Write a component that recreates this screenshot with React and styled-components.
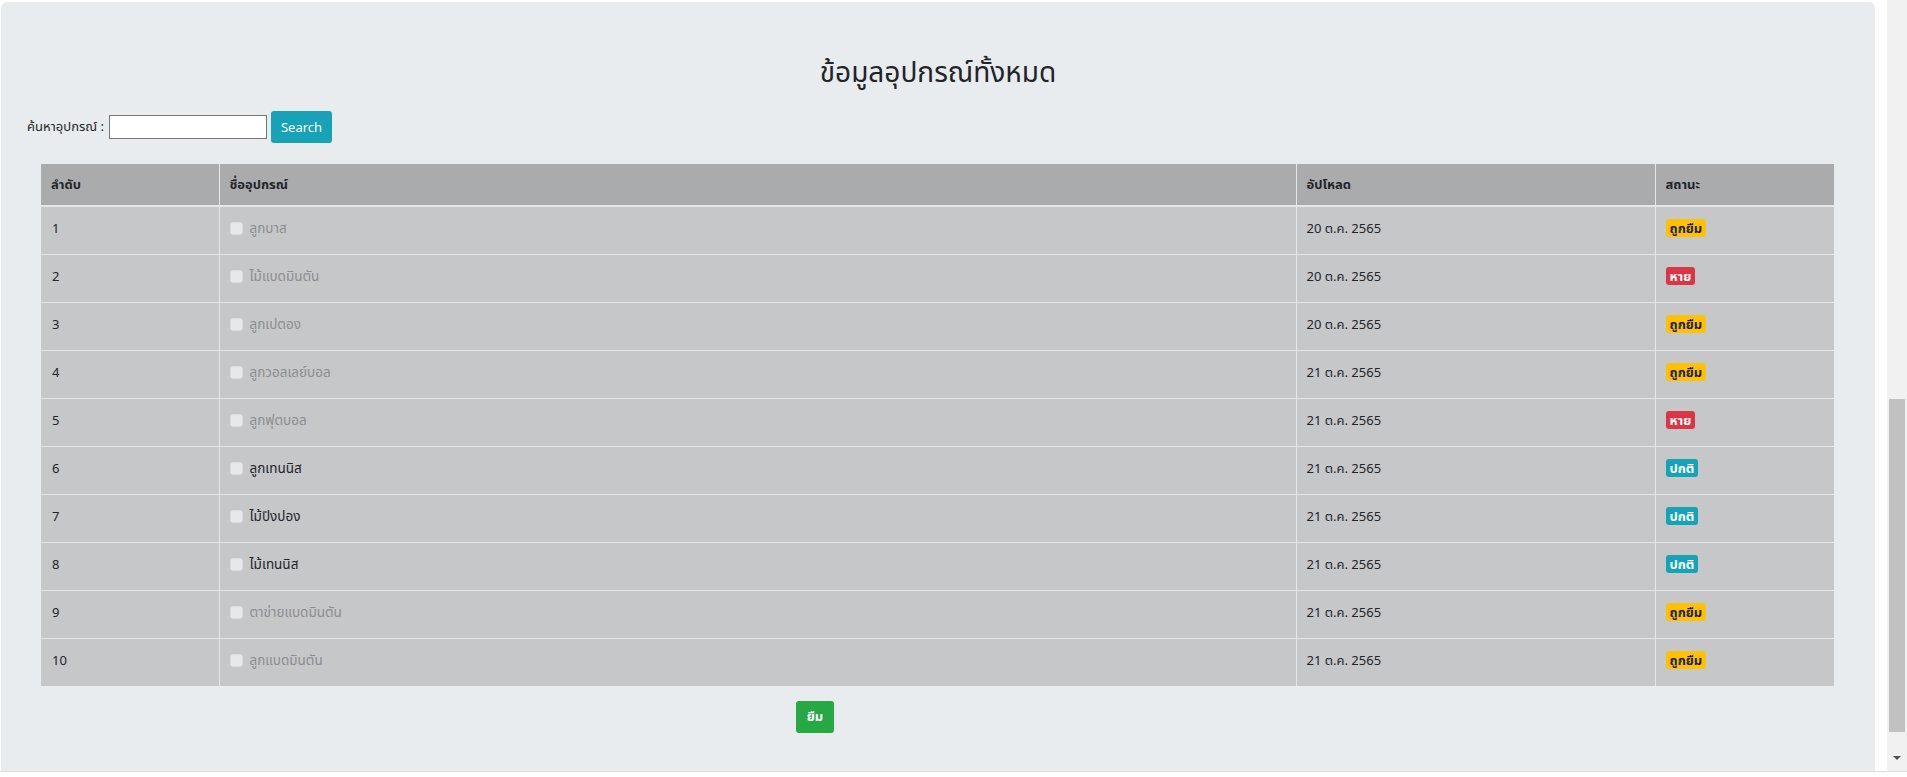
import React from "react";
import styled, { createGlobalStyle } from "styled-components";

const GlobalStyle = createGlobalStyle`
    html, body {
        margin: 0;
        padding: 0;
        background: #fff;
        overflow: hidden;
    }
    body {
        font-family: "Noto Sans", "Noto Sans Thai", Tahoma, "DejaVu Sans", sans-serif;
        font-size: 13px;
        color: #212529;
    }
`;

const items = [
    { id: 1, name: "ลูกบาส", date: "20 ต.ค. 2565", status: "borrowed" },
    { id: 2, name: "ไม้แบดมินตัน", date: "20 ต.ค. 2565", status: "lost" },
    { id: 3, name: "ลูกเปตอง", date: "20 ต.ค. 2565", status: "borrowed" },
    { id: 4, name: "ลูกวอลเลย์บอล", date: "21 ต.ค. 2565", status: "borrowed" },
    { id: 5, name: "ลูกฟุตบอล", date: "21 ต.ค. 2565", status: "lost" },
    { id: 6, name: "ลูกเทนนิส", date: "21 ต.ค. 2565", status: "normal" },
    { id: 7, name: "ไม้ปิงปอง", date: "21 ต.ค. 2565", status: "normal" },
    { id: 8, name: "ไม้เทนนิส", date: "21 ต.ค. 2565", status: "normal" },
    { id: 9, name: "ตาข่ายแบดมินตัน", date: "21 ต.ค. 2565", status: "borrowed" },
    { id: 10, name: "ลูกแบดมินตัน", date: "21 ต.ค. 2565", status: "borrowed" },
];

const statusLabel = {
    borrowed: "ถูกยืม",
    lost: "หาย",
    normal: "ปกติ",
};

const App = () => {
    return (
        <>
            <GlobalStyle />
            <Page>
                <Main>
                    <Panel>
                        <Title>ข้อมูลอุปกรณ์ทั้งหมด</Title>
                        <SearchRow>
                            <label htmlFor="search">ค้นหาอุปกรณ์ :</label>
                            <SearchInput id="search" type="text" />
                            <SearchButton type="button">Search</SearchButton>
                        </SearchRow>
                        <TableWrap>
                            <Table>
                                <colgroup>
                                    <col style={{ width: 178 }} />
                                    <col style={{ width: 1077 }} />
                                    <col style={{ width: 359 }} />
                                    <col style={{ width: 179 }} />
                                </colgroup>
                                <thead>
                                    <tr>
                                        <Th>ลำดับ</Th>
                                        <Th>ชื่ออุปกรณ์</Th>
                                        <Th>อัปโหลด</Th>
                                        <Th>สถานะ</Th>
                                    </tr>
                                </thead>
                                <tbody>
                                    {items.map((item) => {
                                        const disabled = item.status !== "normal";
                                        return (
                                            <tr key={item.id}>
                                                <Td>{item.id}</Td>
                                                <Td>
                                                    <CheckLabel $disabled={disabled}>
                                                        <Check type="checkbox" disabled={disabled} />
                                                        {item.name}
                                                    </CheckLabel>
                                                </Td>
                                                <Td>{item.date}</Td>
                                                <Td>
                                                    <Badge $status={item.status}>{statusLabel[item.status]}</Badge>
                                                </Td>
                                            </tr>
                                        );
                                    })}
                                </tbody>
                            </Table>
                        </TableWrap>
                        <Footer>
                            <BorrowButton type="button">ยืม</BorrowButton>
                        </Footer>
                    </Panel>
                </Main>
                <ScrollTrack>
                    <ScrollThumb />
                    <ScrollArrow />
                </ScrollTrack>
            </Page>
        </>
    );
};

const Page = styled.div`
    display: flex;
    height: 771px;
    border-bottom: 1px solid #dcdcdc;
`;
const Main = styled.div`
    flex: 1;
    display: flex;
    padding: 2px 12px 0 1px;
    min-width: 0;
`;
const Panel = styled.section`
    flex: 1;
    background: #e9ecef;
    border-radius: 6px 6px 0 0;
    display: flex;
    flex-direction: column;
`;
const Title = styled.h3`
    margin: 0;
    padding-top: 52px;
    text-align: center;
    font-size: 28px;
    font-weight: 400;
    line-height: 34px;
    color: #212529;
`;
const SearchRow = styled.div`
    display: flex;
    align-items: center;
    margin-top: 23px;
    padding-left: 26px;
    height: 32px;

    label {
        font-size: 13px;
        margin-right: 5px;
    }
`;
const SearchInput = styled.input`
    width: 158px;
    height: 24px;
    box-sizing: border-box;
    border: 1px solid #767676;
    background: #fff;
    padding: 1px 2px;
    margin: 0 4px 0 0;
    font: inherit;
`;
const SearchButton = styled.button`
    width: 61px;
    height: 32px;
    border: none;
    border-radius: 3px;
    background: #17a2b8;
    color: #fff;
    font: inherit;
    font-size: 13px;
    cursor: pointer;
`;
const TableWrap = styled.div`
    margin: 21px 41px 0 40px;
`;
const Table = styled.table`
    width: 100%;
    table-layout: fixed;
    border-collapse: collapse;
`;
const Th = styled.th`
    height: 42px;
    box-sizing: border-box;
    padding: 0 10px;
    text-align: left;
    vertical-align: middle;
    background: #aaabad;
    font-size: 13px;
    font-weight: 700;
    color: #212529;
    border-left: 1px solid #e4e6e8;
    border-bottom: 2px solid #e4e6e8;

    &:first-child {
        border-left: none;
    }
`;
const Td = styled.td`
    height: 48px;
    box-sizing: border-box;
    padding: 12px 10px 0;
    vertical-align: top;
    background: #c6c7c9;
    font-size: 13px;
    line-height: 19px;
    border-left: 1px solid #e4e6e8;
    border-top: 1px solid #e4e6e8;

    &:first-child {
        border-left: none;
        padding-left: 11px;
    }
    tr:first-child > & {
        border-top: none;
    }
`;
const CheckLabel = styled.label`
    display: inline-flex;
    align-items: center;
    gap: 7px;
    font-size: 13.5px;
    color: ${(p) => (p.$disabled ? "#8b8d90" : "#212529")};
`;
const Check = styled.input`
    appearance: none;
    width: 13px;
    height: 13px;
    margin: 0;
    border-radius: 3px;
    background: #e7e8e9;
    border: 1px solid #dcdddf;
    box-sizing: border-box;
`;
const badgeColors = {
    borrowed: { bg: "#ffc107", fg: "#212529" },
    lost: { bg: "#dc3545", fg: "#fff" },
    normal: { bg: "#17a2b8", fg: "#fff" },
};
const Badge = styled.span`
    display: inline-block;
    padding: 0 4px;
    height: 18px;
    line-height: 18px;
    border-radius: 3px;
    font-size: 13px;
    font-weight: 700;
    background: ${(p) => badgeColors[p.$status].bg};
    color: ${(p) => badgeColors[p.$status].fg};
`;
const Footer = styled.div`
    display: flex;
    padding: 15px 0 0 795px;
`;
const BorrowButton = styled.button`
    width: 38px;
    height: 32px;
    border: none;
    border-radius: 3px;
    background: #28a745;
    color: #fff;
    font: inherit;
    font-size: 13px;
    font-weight: 700;
    cursor: pointer;
`;
const ScrollTrack = styled.div`
    width: 20px;
    background: #f1f1f1;
    display: flex;
    flex-direction: column;
    align-items: center;
    padding-top: 399px;
    box-sizing: border-box;
`;
const ScrollThumb = styled.div`
    width: 16px;
    height: 333px;
    background: #c1c1c1;
`;
const ScrollArrow = styled.div`
    margin-top: 24px;
    width: 0;
    height: 0;
    border-left: 4px solid transparent;
    border-right: 4px solid transparent;
    border-top: 4px solid #505050;
`;

export default App;
